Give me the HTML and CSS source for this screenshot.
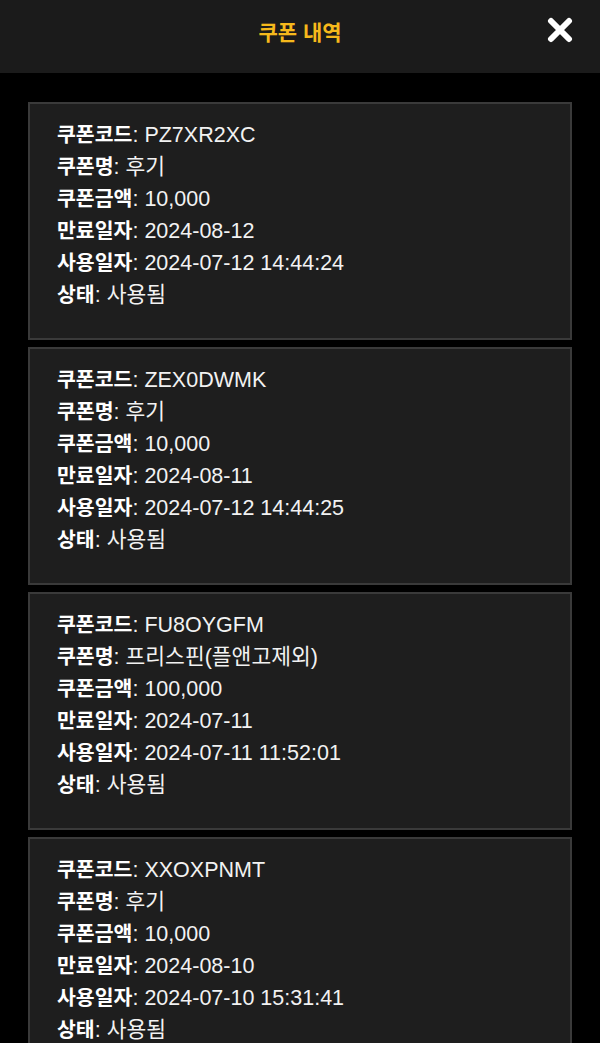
FILE: index.html
```html
<!DOCTYPE html>
<html lang="ko">

<head>
    <meta charset="UTF-8">
    <meta name="viewport" content="width=device-width, initial-scale=1.0">
    <title>쿠폰 내역</title>
    <link rel="stylesheet" href="styles.css">
</head>

<body>
    <!-- 상단 헤더 -->
    <div class="header">
        <div class="title">쿠폰 내역</div>
        <button class="close">
            <svg width="26" height="26" viewBox="0 0 26 26">
                <path d="M4 4 L22 22 M22 4 L4 22" stroke="#fff" stroke-width="6" stroke-linecap="round" />
            </svg>
        </button>
    </div>

    <!-- 쿠폰 목록 -->
    <div class="list">
        <div class="card">
            <p><b>쿠폰코드</b>: PZ7XR2XC</p>
            <p><b>쿠폰명</b>: 후기</p>
            <p><b>쿠폰금액</b>: 10,000</p>
            <p><b>만료일자</b>: 2024-08-12</p>
            <p><b>사용일자</b>: 2024-07-12 14:44:24</p>
            <p><b>상태</b>: 사용됨</p>
        </div>
        <div class="card">
            <p><b>쿠폰코드</b>: ZEX0DWMK</p>
            <p><b>쿠폰명</b>: 후기</p>
            <p><b>쿠폰금액</b>: 10,000</p>
            <p><b>만료일자</b>: 2024-08-11</p>
            <p><b>사용일자</b>: 2024-07-12 14:44:25</p>
            <p><b>상태</b>: 사용됨</p>
        </div>
        <div class="card">
            <p><b>쿠폰코드</b>: FU8OYGFM</p>
            <p><b>쿠폰명</b>: 프리스핀(플앤고제외)</p>
            <p><b>쿠폰금액</b>: 100,000</p>
            <p><b>만료일자</b>: 2024-07-11</p>
            <p><b>사용일자</b>: 2024-07-11 11:52:01</p>
            <p><b>상태</b>: 사용됨</p>
        </div>
        <div class="card">
            <p><b>쿠폰코드</b>: XXOXPNMT</p>
            <p><b>쿠폰명</b>: 후기</p>
            <p><b>쿠폰금액</b>: 10,000</p>
            <p><b>만료일자</b>: 2024-08-10</p>
            <p><b>사용일자</b>: 2024-07-10 15:31:41</p>
            <p><b>상태</b>: 사용됨</p>
        </div>
    </div>
</body>

</html>
```

FILE: styles.css
```css
body {
    margin: 0;
    background-color: #000;
    font-family: "Liberation Sans", "Noto Sans CJK KR", sans-serif;
    color: #fff;
    overflow: hidden;
}

.header {
    height: 73px;
    background-color: #1b1b1b;
    display: flex;
    justify-content: center;
    align-items: center;
    position: relative;
}

.title {
    font-family: "Noto Sans CJK KR", sans-serif;
    font-size: 21px;
    font-weight: bold;
    color: #f6b91c;
    margin-top: -11px;
}

/* 닫기 버튼 */
.close {
    position: absolute;
    right: 27px;
    top: 17px;
    background: none;
    border: none;
    padding: 0;
    cursor: pointer;
}

.list {
    padding: 29px 28px 0;
    display: flex;
    flex-direction: column;
    gap: 7px;
}

.card {
    background-color: #1e1e1e;
    border: 2px solid #3a3a3a;
    padding: 15px 27px 30px;
    height: 238px;
    box-sizing: border-box;
    flex-shrink: 0;
}

.card p {
    margin: 0;
    height: 32px;
    font-size: 21.5px;
    line-height: 32px;
    color: #f2f2f2;
}

.card b {
    font-family: "Noto Sans CJK KR", sans-serif;
    font-size: 20.5px;
    line-height: 1;
    font-weight: bold;
    color: #fff;
}
```
